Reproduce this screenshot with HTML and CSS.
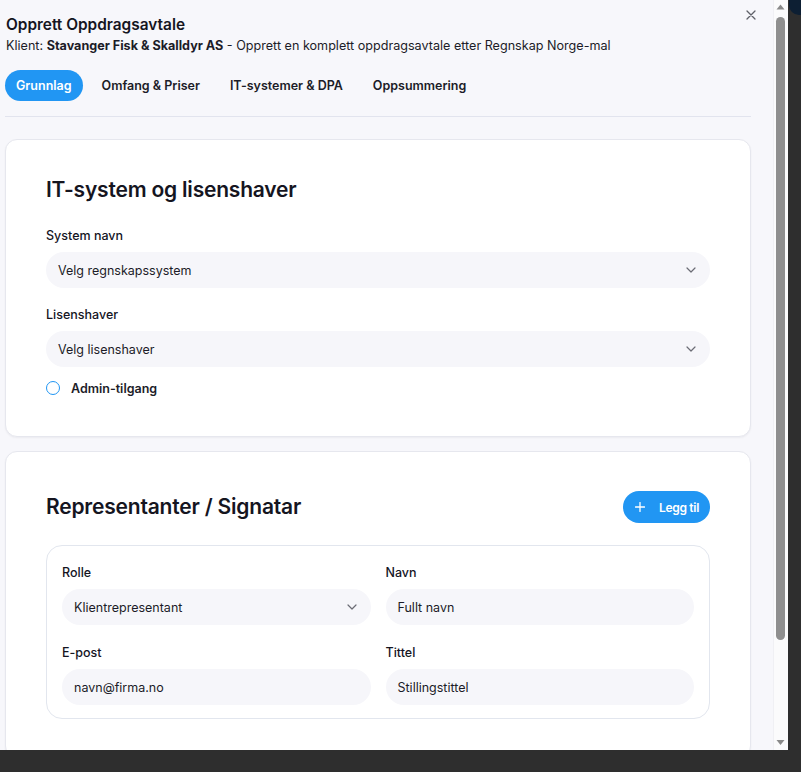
FILE: index.html
```html
<!DOCTYPE html>
<html lang="no">
<head>
<meta charset="utf-8">
<title>Opprett Oppdragsavtale</title>
<link rel="stylesheet" href="styles.css">
</head>
<body>
<div class="screen">
  <div class="dialog">
    <div class="content">
      <header class="dlg-head">
        <div class="titles">
          <h1 class="title">Opprett Oppdragsavtale</h1>
          <p class="subtitle">Klient: <strong>Stavanger Fisk &amp; Skalldyr AS</strong> - Opprett en komplett oppdragsavtale etter Regnskap Norge-mal</p>
        </div>
        <button class="close" aria-label="Lukk">
          <svg width="10" height="10" viewBox="0 0 10 10"><path d="M1 1L9 9M9 1L1 9" stroke="#5f6068" stroke-width="1.3" stroke-linecap="round"/></svg>
        </button>
      </header>

      <nav class="tabs">
        <span class="tab active">Grunnlag</span>
        <span class="tab">Omfang &amp; Priser</span>
        <span class="tab">IT-systemer &amp; DPA</span>
        <span class="tab">Oppsummering</span>
      </nav>

      <section class="card">
        <h2 class="card-title">IT-system og lisenshaver</h2>
        <div class="field">
          <label class="label">System navn</label>
          <div class="select">
            <span>Velg regnskapssystem</span>
            <svg class="chev" width="10" height="6" viewBox="0 0 10 6"><path d="M1 1L5 5L9 1" fill="none" stroke="#6b6c75" stroke-width="1.2" stroke-linecap="round" stroke-linejoin="round"/></svg>
          </div>
        </div>
        <div class="field">
          <label class="label">Lisenshaver</label>
          <div class="select">
            <span>Velg lisenshaver</span>
            <svg class="chev" width="10" height="6" viewBox="0 0 10 6"><path d="M1 1L5 5L9 1" fill="none" stroke="#6b6c75" stroke-width="1.2" stroke-linecap="round" stroke-linejoin="round"/></svg>
          </div>
        </div>
        <div class="radio-row">
          <span class="radio"></span>
          <span class="radio-label">Admin-tilgang</span>
        </div>
      </section>

      <section class="card">
        <div class="card-head">
          <h2 class="card-title flat">Representanter / Signatar</h2>
          <button class="btn-add">
            <svg width="10" height="10" viewBox="0 0 10 10"><path d="M5 0.5V9.5M0.5 5H9.5" stroke="#fff" stroke-width="1.3" stroke-linecap="round"/></svg>
            <span>Legg til</span>
          </button>
        </div>
        <div class="rep-box">
          <div class="field">
            <label class="label">Rolle</label>
            <div class="select">
              <span>Klientrepresentant</span>
              <svg class="chev" width="10" height="6" viewBox="0 0 10 6"><path d="M1 1L5 5L9 1" fill="none" stroke="#6b6c75" stroke-width="1.2" stroke-linecap="round" stroke-linejoin="round"/></svg>
            </div>
          </div>
          <div class="field">
            <label class="label">Navn</label>
            <div class="input">Fullt navn</div>
          </div>
          <div class="field">
            <label class="label">E-post</label>
            <div class="input">navn@firma.no</div>
          </div>
          <div class="field">
            <label class="label">Tittel</label>
            <div class="input">Stillingstittel</div>
          </div>
        </div>
      </section>
    </div>

    <div class="scrollbar" aria-hidden="true">
      <svg class="sb-arrow" width="15" height="15" viewBox="0 0 15 15"><path d="M3.5 9.5L7.5 4.5L11.5 9.5Z" fill="#8a8a8a"/></svg>
      <div class="sb-track"><div class="sb-thumb"></div></div>
      <svg class="sb-arrow" width="15" height="15" viewBox="0 0 15 15"><path d="M3.5 5L7.5 10L11.5 5Z" fill="#8a8a8a"/></svg>
    </div>
  </div>
  <div class="backdrop"><div class="corner"></div></div>
</div>
</body>
</html>
```

FILE: styles.css
```css
* { box-sizing: border-box; }
html, body { margin: 0; height: 100%; }
body {
  background: #2e2e2e;
  font-family: Inter, "Noto Sans", "Liberation Sans", sans-serif;
  color: #1c1c28;
  overflow: hidden;
}
.screen {
  display: flex;
  height: 772px;
}
.dialog {
  width: 788px;
  height: 750px;
  flex: none;
  display: flex;
  background: #f7f7fb;
}
.content {
  flex: 1;
  min-width: 0;
  overflow: hidden;
  padding: 13px 22px 0 5px;
}
.scrollbar {
  width: 15px;
  flex: none;
  display: flex;
  flex-direction: column;
  background: #fbfbfc;
  border-left: 1px solid #f0f0f4;
}
.sb-arrow { display: block; flex: none; margin-left: -1px; }
.sb-track {
  flex: 1;
  padding: 2px 2px 0 2px;
  display: flex;
  justify-content: center;
}
.sb-thumb {
  width: 9px;
  height: 623px;
  border-radius: 5px;
  background: #8f8f8f;
  margin-left: -1px;
}
.backdrop {
  flex: 1;
  display: flex;
  justify-content: flex-end;
  align-items: flex-start;
}
.corner {
  width: 12px;
  height: 15px;
  background: #0d1f33;
  border-bottom-left-radius: 10px;
}

.dlg-head {
  display: flex;
  justify-content: space-between;
  align-items: flex-start;
}
.title {
  margin: 0 0 0 1px;
  font-size: 15.4px;
  line-height: 24px;
  font-weight: 600;
  color: #15151f;
}
.subtitle {
  margin: 0 0 0 1px;
  font-size: 12.6px;
  line-height: 18px;
  color: #1c1c28;
}
.subtitle strong { font-weight: 700; }
.close {
  border: 0;
  background: none;
  padding: 0;
  margin: -3px -5px 0 0;
  width: 10px;
  height: 10px;
  display: flex;
}

.tabs {
  display: flex;
  gap: 8px;
  margin-top: 15px;
  padding-bottom: 15px;
  border-bottom: 1px solid #e2e4ee;
}
.tab {
  font-size: 12.5px;
  font-weight: 600;
  line-height: 17px;
  padding: 7px 11px;
  border-radius: 16px;
  color: #1c1c28;
}
.tab.active {
  background: #2196f3;
  color: #fff;
}

.card {
  background: #fff;
  border: 1px solid #e6e7ee;
  border-radius: 12px;
  box-shadow: 0 1px 2px rgba(20, 20, 40, 0.05);
  padding: 36px 40px 38px;
  margin-top: 22px;
}
.card + .card { margin-top: 14px; padding-top: 37px; }
.card-title {
  margin: 0 0 22px;
  font-size: 21px;
  line-height: 28px;
  font-weight: 600;
  color: #15151f;
  letter-spacing: -0.2px;
}
.card-title.flat { margin: 0; }

.field { display: flex; flex-direction: column; }
.field + .field { margin-top: 17px; }
.label {
  font-size: 12.5px;
  line-height: 20px;
  font-weight: 500;
  margin-bottom: 6px;
  color: #15151f;
}
.select, .input {
  height: 36px;
  border-radius: 18px;
  background: #f6f6fa;
  padding: 0 12px;
  display: flex;
  align-items: center;
  justify-content: space-between;
  font-size: 12.5px;
  color: #1c1c28;
}
.chev { margin-right: 2px; }

.radio-row {
  display: flex;
  align-items: center;
  gap: 11px;
  margin-top: 11px;
  height: 20px;
}
.radio {
  width: 14px;
  height: 14px;
  border-radius: 50%;
  border: 1.5px solid #2196f3;
}
.radio-label {
  font-size: 12.5px;
  font-weight: 600;
}

.card-head {
  display: flex;
  justify-content: space-between;
  align-items: center;
  height: 36px;
}
.btn-add {
  display: flex;
  align-items: center;
  gap: 14px;
  height: 32px;
  padding: 0 11px 0 12px;
  border: 0;
  border-radius: 16px;
  background: #2196f3;
  color: #fff;
  font-family: inherit;
  font-size: 12px;
  font-weight: 600;
  letter-spacing: -0.3px;
}

.rep-box {
  margin-top: 20px;
  border: 1px solid #e2e6ee;
  border-radius: 16px;
  padding: 17px 15px 13px;
  display: grid;
  grid-template-columns: 1fr 1fr;
  column-gap: 15px;
  row-gap: 18px;
}
.rep-box .field + .field { margin-top: 0; }
```
